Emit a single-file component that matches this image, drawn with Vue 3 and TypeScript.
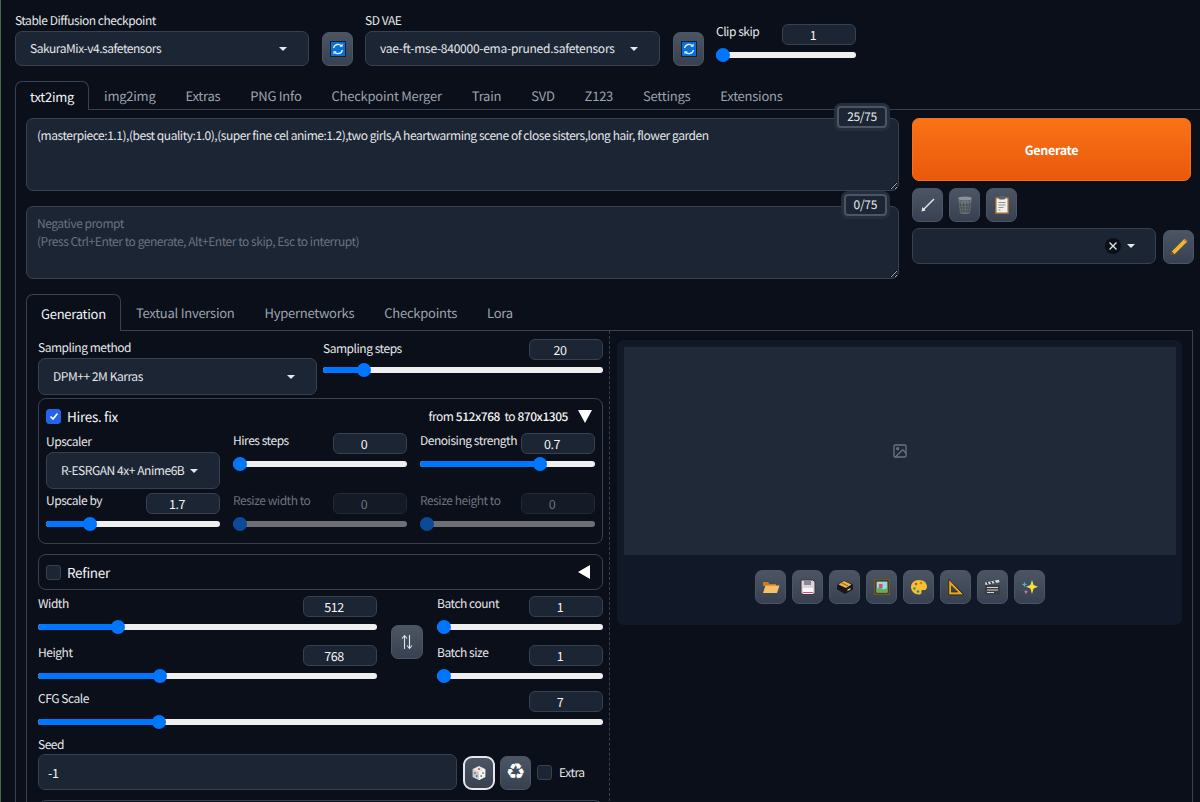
<script setup lang="ts">
interface Slider {
  label: string;
  value: string;
  pct: number;
  off?: boolean;
}

const mainTabs = ['img2img', 'Extras', 'PNG Info', 'Checkpoint Merger', 'Train', 'SVD', 'Z123', 'Settings', 'Extensions'];
const subTabs = ['Textual Inversion', 'Hypernetworks', 'Checkpoints', 'Lora'];

const hiresTop: Slider[] = [
  { label: 'Hires steps', value: '0', pct: 0 },
  { label: 'Denoising strength', value: '0.7', pct: 70 },
];
const hiresBottom: Slider[] = [
  { label: 'Upscale by', value: '1.7', pct: 23 },
  { label: 'Resize width to', value: '0', pct: 0, off: true },
  { label: 'Resize height to', value: '0', pct: 0, off: true },
];
const sizes: Slider[] = [
  { label: 'Width', value: '512', pct: 22.5 },
  { label: 'Height', value: '768', pct: 35.4 },
];
const batches: Slider[] = [
  { label: 'Batch count', value: '1', pct: 0 },
  { label: 'Batch size', value: '1', pct: 0 },
];
const cfg: Slider = { label: 'CFG Scale', value: '7', pct: 20.7 };
const steps: Slider = { label: 'Sampling steps', value: '20', pct: 12.8 };
const clip: Slider = { label: 'Clip skip', value: '1', pct: 0 };

const prompt =
  '(masterpiece:1.1),(best quality:1.0),(super fine cel anime:1.2),two girls,A heartwarming scene of close sisters,long hair, flower garden';
const negative = 'Negative prompt\n(Press Ctrl+Enter to generate, Alt+Enter to skip, Esc to interrupt)';
</script>

<template>
  <div class="page">
    <div class="quick">
      <div class="dd-field w294">
        <span class="lbl">Stable Diffusion checkpoint</span>
        <div class="dd"><span>SakuraMix-v4.safetensors</span><i class="caret"></i></div>
      </div>
      <button class="tool refresh">
        <svg width="16" height="16" viewBox="0 0 16 16">
          <rect x=".5" y=".5" width="15" height="15" fill="#0a6fd6" stroke="#14202e" />
          <path d="M3.500 7a4.600 4.600 0 0 1 8-2M12.500 9a4.600 4.600 0 0 1-8 2" fill="none" stroke="#dff1ff" stroke-width="1.400" />
          <path d="M12.600 2.600v3.200H9.400zM3.400 13.400v-3.200h3.200z" fill="#dff1ff" />
        </svg>
      </button>
      <div class="dd-field w295">
        <span class="lbl">SD VAE</span>
        <div class="dd vae"><span>vae-ft-mse-840000-ema-pruned.safetensors</span><i class="caret"></i></div>
      </div>
      <button class="tool refresh">
        <svg width="16" height="16" viewBox="0 0 16 16">
          <rect x=".5" y=".5" width="15" height="15" fill="#0a6fd6" stroke="#14202e" />
          <path d="M3.500 7a4.600 4.600 0 0 1 8-2M12.500 9a4.600 4.600 0 0 1-8 2" fill="none" stroke="#dff1ff" stroke-width="1.400" />
          <path d="M12.600 2.600v3.200H9.400zM3.400 13.400v-3.200h3.200z" fill="#dff1ff" />
        </svg>
      </button>
      <div class="slider clip">
        <div class="slider-head">
          <span class="lbl">{{ clip.label }}</span>
          <input class="num" :value="clip.value" />
        </div>
        <div class="track"><div class="fill" :style="{ '--p': clip.pct }"></div></div>
      </div>
    </div>

    <div class="tabs main-tabs">
      <div class="tab active">txt2img</div>
      <div v-for="t in mainTabs" :key="t" class="tab">{{ t }}</div>
    </div>

    <div class="main-panel">
      <div class="prompt-row">
        <div class="prompts">
          <div class="prompt-box">
            <textarea class="prompt" :value="prompt"></textarea>
            <span class="counter">25/75</span>
          </div>
          <div class="prompt-box">
            <textarea class="prompt" :placeholder="negative"></textarea>
            <span class="counter">0/75</span>
          </div>
        </div>
        <div class="actions">
          <button class="generate">Generate</button>
          <div class="tool-row">
            <button class="tool">
              <svg width="18" height="18" viewBox="0 0 18 18">
                <path d="M15 3 4 14" stroke="#e5e7eb" stroke-width="1.500" />
                <path d="M2.500 15.500 3.400 11l3.200 3.400z" fill="#e5e7eb" />
              </svg>
            </button>
            <button class="tool">
              <svg width="18" height="20" viewBox="0 0 18 20">
                <ellipse cx="9" cy="3.500" rx="7" ry="2" fill="#8b9298" />
                <path d="M2.300 4.500 4 17.500q.3 1.500 5 1.500t5-1.500l1.700-13q-2 1.500-6.700 1.500T2.300 4.500z" fill="#6b7378" />
                <path d="M4 7l2 11M7.500 8l.4 10M11 8l-.5 10M14 7l-2 11M3 10h12M3.500 13h11M4 16h10" stroke="#3f464c" stroke-width=".7" />
              </svg>
            </button>
            <button class="tool">
              <svg width="16" height="20" viewBox="0 0 16 20">
                <rect x="1" y="2" width="14" height="17" rx="1" fill="#9a6a3c" />
                <rect x="2.500" y="3.500" width="11" height="14" fill="#f2efe6" />
                <rect x="5" y="1" width="6" height="3.500" rx="1" fill="#59616a" />
                <path d="M4.500 7.500h7M4.500 10h7M4.500 12.500h5M4.500 15h2" stroke="#8a939c" stroke-width="1.100" />
              </svg>
            </button>
          </div>
          <div class="style-row">
            <div class="dd style-dd">
              <span class="clear">
                <svg width="10" height="10" viewBox="0 0 10 10"><path d="M1.500 1.500l7 7M8.500 1.500l-7 7" stroke="#e5e7eb" stroke-width="1.300" /></svg>
              </span>
              <i class="caret"></i>
            </div>
            <button class="tool pencil">
              <svg width="20" height="20" viewBox="0 0 18 18">
                <path d="M14 1.500l2.500 2.500L5 15.500 2.500 13z" fill="#f2b632" />
                <path d="M2.500 13 5 15.500 1.500 16.500z" fill="#8a4b22" />
                <path d="M13 2.500l2.500 2.500 1-1L14 1.500z" fill="#d9822b" />
              </svg>
            </button>
          </div>
        </div>
      </div>

      <div class="tabs sub-tabs">
        <div class="tab active">Generation</div>
        <div v-for="t in subTabs" :key="t" class="tab">{{ t }}</div>
      </div>

      <div class="sub-panel">
        <div class="settings">
          <div class="row-sampling">
            <div class="dd-field">
              <span class="lbl">Sampling method</span>
              <div class="dd tall"><span>DPM++ 2M Karras</span><i class="caret"></i></div>
            </div>
            <div class="slider">
              <div class="slider-head">
                <span class="lbl">{{ steps.label }}</span>
                <input class="num" :value="steps.value" />
              </div>
              <div class="track"><div class="fill" :style="{ '--p': steps.pct }"></div></div>
            </div>
          </div>

          <div class="accordion hires">
            <div class="acc-head">
              <span class="check on">
                <svg width="10" height="10" viewBox="0 0 10 10"><path d="M1.500 5.500 4 8l4.500-5.500" fill="none" stroke="#fff" stroke-width="1.600" /></svg>
              </span>
              <span class="acc-title">Hires. fix</span>
              <span class="acc-note">from <b>512x768</b>&nbsp; to <b>870x1305</b></span>
              <i class="tri down"></i>
            </div>
            <div class="hires-grid">
              <div class="dd-field">
                <span class="lbl">Upscaler</span>
                <div class="dd tall"><span>R-ESRGAN 4x+ Anime6B</span><i class="caret"></i></div>
              </div>
              <div v-for="s in hiresTop" :key="s.label" class="slider">
                <div class="slider-head">
                  <span class="lbl">{{ s.label }}</span>
                  <input class="num" :value="s.value" />
                </div>
                <div class="track"><div class="fill" :style="{ '--p': s.pct }"></div></div>
              </div>
              <div v-for="s in hiresBottom" :key="s.label" class="slider" :class="{ off: s.off }">
                <div class="slider-head">
                  <span class="lbl">{{ s.label }}</span>
                  <input class="num" :value="s.value" />
                </div>
                <div class="track"><div class="fill" :style="{ '--p': s.pct }"></div></div>
              </div>
            </div>
          </div>

          <div class="accordion refiner">
            <div class="acc-head">
              <span class="check"></span>
              <span class="acc-title">Refiner</span>
              <i class="tri left"></i>
            </div>
          </div>

          <div class="row-size">
            <div class="stack">
              <div v-for="s in sizes" :key="s.label" class="slider">
                <div class="slider-head">
                  <span class="lbl">{{ s.label }}</span>
                  <input class="num" :value="s.value" />
                </div>
                <div class="track"><div class="fill" :style="{ '--p': s.pct }"></div></div>
              </div>
            </div>
            <button class="tool swap">
              <svg width="12" height="16" viewBox="0 0 12 16">
                <path d="M3.500 15V2M1 4.500 3.500 1.500 6 4.500" fill="none" stroke="#d8e6e2" stroke-width="1.100" />
                <path d="M8.500 1v13M6 11.500l2.500 3 2.500-3" fill="none" stroke="#e5e7eb" stroke-width="1.100" />
              </svg>
            </button>
            <div class="stack">
              <div v-for="s in batches" :key="s.label" class="slider">
                <div class="slider-head">
                  <span class="lbl">{{ s.label }}</span>
                  <input class="num" :value="s.value" />
                </div>
                <div class="track"><div class="fill" :style="{ '--p': s.pct }"></div></div>
              </div>
            </div>
          </div>

          <div class="slider cfg">
            <div class="slider-head">
              <span class="lbl">{{ cfg.label }}</span>
              <input class="num" :value="cfg.value" />
            </div>
            <div class="track"><div class="fill" :style="{ '--p': cfg.pct }"></div></div>
          </div>

          <div class="seed-row">
            <div class="seed-field">
              <span class="lbl">Seed</span>
              <input class="seed" value="-1" />
            </div>
            <button class="tool dice">
              <svg width="16" height="16" viewBox="0 0 18 18">
                <path d="M9 1l7 3.500v9L9 17l-7-3.500v-9z" fill="#e8e8e8" />
                <path d="M9 8.500v8.500L2 13.500v-9z" fill="#c9c9c9" />
                <path d="M9 8.500V17l7-3.500v-9z" fill="#f5f5f5" />
                <ellipse cx="9" cy="4.600" rx="1.400" ry=".9" fill="#d33" />
                <circle cx="4.500" cy="9" r=".9" fill="#444" />
                <circle cx="6.500" cy="12.500" r=".9" fill="#444" />
                <circle cx="13.500" cy="9" r=".9" fill="#444" />
                <circle cx="11.500" cy="12.500" r=".9" fill="#444" />
              </svg>
            </button>
            <button class="tool recycle">♻</button>
            <span class="check extra-check"></span>
            <span class="extra">Extra</span>
          </div>
          <div class="more"></div>
        </div>

        <div class="gallery">
          <div class="image-area">
            <svg width="16" height="16" viewBox="0 0 24 24" fill="none" stroke="#6b7280" stroke-width="2" stroke-linecap="round" stroke-linejoin="round">
              <rect x="3" y="3" width="18" height="18" rx="2" />
              <circle cx="8.500" cy="8.500" r="1.500" />
              <path d="M21 15l-5-5L5 21" />
            </svg>
          </div>
          <div class="gallery-tools">
            <button class="tool">
              <svg width="18" height="14" viewBox="0 0 18 14">
                <path d="M1 2h5l1.500 2H14v2H1z" fill="#c9791f" />
                <path d="M1 13 3.500 5.500H17.500L15 13z" fill="#f4c265" />
              </svg>
            </button>
            <button class="tool">
              <svg width="16" height="16" viewBox="0 0 16 16">
                <path d="M1 1h12l2 2v12H1z" fill="#d9d3dc" stroke="#3a3340" />
                <rect x="4" y="1.500" width="7" height="4.500" fill="#8c8593" />
                <rect x="3" y="9" width="10" height="6" fill="#fbf5fa" />
                <path d="M3 13.500h10" stroke="#d84a6a" />
              </svg>
            </button>
            <button class="tool">
              <svg width="18" height="16" viewBox="0 0 18 16">
                <path d="M1 6 8 1.500l9 4v5L9 15 1 10.500z" fill="#15181c" />
                <path d="M2.500 5.500 8 2l7.500 3.500L10 9z" fill="#f0b53a" />
                <path d="M5.500 3.800 12 7" stroke="#8a5c18" />
                <path d="M11.500 10.500l3-1.500v1.500l-3 1.500z" fill="#cfd3d6" />
              </svg>
            </button>
            <button class="tool">
              <svg width="16" height="16" viewBox="0 0 16 16">
                <rect width="16" height="16" fill="#6d5a22" />
                <rect x="1.500" y="1.500" width="13" height="13" fill="#2a2413" />
                <rect x="2.500" y="2.500" width="11" height="11" fill="#9ed3ea" />
                <path d="M2.500 13.500V10l3-2 4 2.500 4-1.500v4.500z" fill="#5fae5a" />
                <rect x="5" y="5" width="3.500" height="4" fill="#c85a5a" />
              </svg>
            </button>
            <button class="tool">
              <svg width="18" height="16" viewBox="0 0 18 16">
                <path d="M9 1c4.500 0 8 2.800 8 6.500 0 3-2 4-3.500 3.500-1.500-.4-2.500.3-2 2 .4 1.500-.8 2.500-2.500 2.500C4.500 15.500 1 12.200 1 8s3.500-7 8-7z" fill="#f2c230" />
                <circle cx="6" cy="5" r="1.300" fill="#d9432f" />
                <circle cx="11" cy="4" r="1.300" fill="#e0752a" />
                <circle cx="4.500" cy="9.500" r="1.300" fill="#3e9a4a" />
                <circle cx="8" cy="12.500" r="1.300" fill="#3d6cc9" />
              </svg>
            </button>
            <button class="tool">
              <svg width="18" height="18" viewBox="0 0 16 16">
                <path d="M1.500 1v14H15z" fill="#e5a823" stroke="#2a2413" stroke-width=".8" />
                <path d="M4 7v5.500h5.500z" fill="#3c4450" stroke="#2a2413" stroke-width=".6" />
              </svg>
            </button>
            <button class="tool">
              <svg width="17" height="16" viewBox="0 0 17 16">
                <rect x="1" y="6" width="15" height="9.500" fill="#3a3d42" />
                <path d="M1 3.500 15 .8l.5 2.500L1.500 6z" fill="#d5d8db" />
                <path d="M3 3.200l1.500 2.300M6.500 2.500 8 4.800M10 1.800l1.500 2.300" stroke="#2c2f33" stroke-width="1.300" />
                <path d="M3 8.500h11M3 11h11M3 13.500h7" stroke="#cfd3d6" stroke-width="1" />
              </svg>
            </button>
            <button class="tool">
              <svg width="18" height="18" viewBox="0 0 18 18">
                <path d="M11 2l1.600 5 4.400 1.800-4.400 1.800L11 16l-1.600-5.400L5 8.800l4.400-1.800z" fill="#f6e13c" />
                <path d="M3.500 3.500l.8 2.200 2 .8-2 .8-.8 2.200-.8-2.200-2-.8 2-.8z" fill="#3fb8c9" />
                <path d="M5 11.500l.6 1.700 1.600.6-1.600.6L5 16.500l-.6-2.100-1.600-.6 1.600-.6z" fill="#e07ab0" />
              </svg>
            </button>
          </div>
        </div>
      </div>
    </div>
  </div>
</template>

<style>
html,
body {
  background: #0b0f19;
  color-scheme: dark;
  overflow: hidden;
}
</style>

<style scoped>
.page {
  height: 802px;
  overflow: hidden;
  background: #0b0f19;
  border-left: 1px solid #3f6b47;
  box-sizing: border-box;
  padding-left: 14px;
  color: #f3f4f6;
  font-family: "Noto Sans CJK SC", "Noto Sans", sans-serif;
  font-size: 12px;
  letter-spacing: -0.45px;
  text-rendering: geometricPrecision;
}
button,
input,
textarea {
  font-family: inherit;
  color: inherit;
  letter-spacing: inherit;
  text-rendering: inherit;
}
.lbl {
  display: block;
  font-size: 12px;
  letter-spacing: -0.47px;
  line-height: 18px;
  color: #e5e7eb;
  white-space: nowrap;
}

/* top settings */
.quick {
  display: flex;
  align-items: flex-end;
  height: 66px;
  box-sizing: border-box;
}
.w294 {
  width: 294px;
}
.w295 {
  width: 295px;
}
.dd-field .lbl {
  margin-bottom: 1px;
}
.dd {
  display: flex;
  align-items: center;
  justify-content: space-between;
  height: 35px;
  box-sizing: border-box;
  padding: 0 14px;
  background: #1c2533;
  border: 1px solid #374151;
  border-radius: 7px;
  white-space: nowrap;
  color: #e5e7eb;
}
.dd.tall {
  height: 37px;
}
.dd.vae {
  letter-spacing: -0.25px;
}
.caret {
  flex: none;
  width: 0;
  height: 0;
  margin-right: 7px;
  border-left: 4px solid transparent;
  border-right: 4px solid transparent;
  border-top: 4px solid #e5e7eb;
}
.tool {
  display: flex;
  flex: none;
  align-items: center;
  justify-content: center;
  width: 31px;
  height: 34px;
  padding: 0;
  border: 1px solid #4b5563;
  border-radius: 7px;
  background: linear-gradient(to bottom, #4b5563, #374151);
  box-sizing: border-box;
}
.refresh {
  margin: 0 12px 0 13px;
}
.clip {
  width: 140px;
  align-self: flex-start;
  margin-top: 24px;
}

/* sliders */
.slider-head {
  display: flex;
  align-items: flex-start;
  justify-content: space-between;
  height: 21px;
}
.slider-head .lbl {
  margin-top: -1px;
}
.num {
  flex: none;
  width: 74px;
  height: 21px;
  box-sizing: border-box;
  padding: 0 12px 0 0;
  text-align: center;
  font-size: 12.500px;
  background: #1c2533;
  border: 1px solid #374151;
  border-radius: 6px;
  outline: none;
}
.track {
  position: relative;
  height: 6px;
  margin-top: 7px;
  background: #efefef;
  border-radius: 3px;
}
.fill {
  position: absolute;
  left: 0;
  top: 0;
  bottom: 0;
  width: calc(7px + (100% - 14px) * var(--p) / 100);
  background: #0075ff;
  border-radius: 3px;
}
.fill::after {
  content: "";
  position: absolute;
  right: -7px;
  top: -4px;
  width: 14px;
  height: 14px;
  border-radius: 50%;
  background: #0075ff;
}
.off .lbl {
  color: #6b7280;
}
.off .num {
  color: #6b7280;
  background: #141a26;
  border-color: #1f2937;
}
.off .track {
  background: #6d6f75;
}
.off .fill,
.off .fill::after {
  background: #0a4a96;
}

/* tabs */
.tabs {
  display: flex;
  border-bottom: 1px solid #374151;
}
.tab {
  padding: 0 15px;
  font-size: 13px;
  letter-spacing: -0.25px;
  color: #9ca3af;
  white-space: nowrap;
}
.tab.active {
  position: relative;
  color: #f3f4f6;
  background: #0b0f19;
  border: 1px solid #374151;
  border-bottom: none;
  border-radius: 7px 7px 0 0;
  margin-bottom: -1px;
  padding: 0 14px;
}
.main-tabs {
  margin-top: 15px;
  height: 28px;
  line-height: 30px;
}
.sub-tabs {
  height: 36px;
  line-height: 38px;
  margin-right: 7px;
}
.sub-tabs .tab.active {
  height: 37px;
  box-sizing: border-box;
}

/* prompts */
.main-panel {
  border-left: 1px solid #374151;
  padding: 8px 0 0 10px;
}
.prompt-row {
  display: flex;
  gap: 13px;
  height: 176px;
}
.prompts {
  display: flex;
  flex-direction: column;
  gap: 15px;
  width: 873px;
}
.prompt-box {
  position: relative;
  height: 73px;
}
.prompt {
  display: block;
  width: 100%;
  height: 73px;
  box-sizing: border-box;
  padding: 8px 10px;
  font-size: 12px;
  letter-spacing: -0.46px;
  line-height: 18px;
  background: #1c2533;
  border: 1px solid #374151;
  border-radius: 7px;
  outline: none;
  color: #e5e7eb;
}
.prompt::placeholder {
  color: #6b7280;
}
.counter {
  position: absolute;
  right: 12px;
  top: -12px;
  padding: 0 8px;
  line-height: 18px;
  font-size: 12px;
  letter-spacing: -0.3px;
  color: #e5e7eb;
  background: #1c2533;
  border: 2px solid #4b5563;
  border-radius: 4px;
  box-shadow: 0 0 0 3px #252e3c;
}
.actions {
  width: 279px;
}
.generate {
  display: block;
  width: 100%;
  height: 63px;
  font-size: 12.500px;
  letter-spacing: -0.3px;
  font-weight: 700;
  color: #fff;
  background: linear-gradient(to bottom, #f97316, #ea580c);
  border: 1px solid #f97316;
  border-radius: 7px;
}
.tool-row {
  display: flex;
  gap: 6px;
  margin-top: 7px;
}
.style-row {
  display: flex;
  align-items: flex-end;
  margin-top: 6px;
}
.style-dd {
  flex: none;
  width: 244px;
  height: 36px;
  justify-content: flex-end;
  gap: 6px;
  padding-right: 20px;
}
.clear {
  display: flex;
  align-items: center;
  justify-content: center;
  width: 16px;
  height: 16px;
  background: #0b0f19;
  border-radius: 50%;
}
.style-dd .caret {
  margin-right: 0;
}
.pencil {
  margin-left: 7px;
}

/* generation panel */
.sub-panel {
  display: flex;
  height: 500px;
  margin-right: 7px;
  border-left: 1px solid #374151;
  border-right: 1px solid #374151;
  padding: 8px 0 0 11px;
}
.settings {
  width: 565px;
  flex: none;
}
.row-sampling {
  display: grid;
  grid-template-columns: 279px 280px;
  gap: 6px;
  height: 59px;
}
.row-sampling .slider .lbl {
  margin-top: 1px;
}
.accordion {
  border: 1px solid #374151;
  border-radius: 8px;
  box-sizing: border-box;
  padding: 0 7px;
}
.hires {
  height: 146px;
}
.acc-head {
  display: flex;
  align-items: center;
  height: 34px;
}
.check {
  flex: none;
  display: flex;
  align-items: center;
  justify-content: center;
  width: 15px;
  height: 15px;
  box-sizing: border-box;
  background: #1c2533;
  border: 1px solid #374151;
  border-radius: 3px;
}
.check.on {
  background: #2563eb;
  border-color: #2563eb;
}
.acc-title {
  margin-left: 6px;
  font-size: 13.500px;
  letter-spacing: -0.3px;
  color: #f3f4f6;
}
.acc-note {
  margin-left: auto;
  font-size: 12px;
}
.acc-note b {
  font-weight: 500;
}
.tri {
  flex: none;
  width: 0;
  height: 0;
}
.tri.down {
  margin: 0 3px 0 10px;
  border-left: 7px solid transparent;
  border-right: 7px solid transparent;
  border-top: 13px solid #fff;
}
.tri.left {
  margin: 0 5px 0 auto;
  border-top: 7px solid transparent;
  border-bottom: 7px solid transparent;
  border-right: 12px solid #fff;
}
.hires-grid {
  display: grid;
  grid-template-columns: 174px 174px 175px;
  grid-template-rows: 60px 50px;
  column-gap: 13px;
}
.refiner {
  display: flex;
  height: 36px;
  margin-top: 10px;
  align-items: center;
}
.refiner .acc-head {
  flex: 1;
}
.row-size {
  display: flex;
  align-items: center;
  margin-top: 6px;
}
.stack {
  display: flex;
  flex-direction: column;
  gap: 15px;
  width: 339px;
}
.stack:last-child {
  width: 166px;
}
.swap {
  margin: 9px 14px 0;
  width: 32px;
}
.cfg {
  margin-top: 12px;
}
.seed-row {
  display: flex;
  align-items: flex-end;
  margin-top: 11px;
}
.seed-field {
  width: 419px;
}
.seed {
  display: block;
  width: 100%;
  height: 36px;
  box-sizing: border-box;
  padding: 0 9px;
  font-size: 12.500px;
  background: #1c2533;
  border: 1px solid #374151;
  border-radius: 7px;
  outline: none;
}
.dice {
  margin-left: 6px;
  width: 32px;
  border: 2px solid #e5e7eb;
  border-radius: 9px;
}
.recycle {
  margin-left: 5px;
  font-family: "DejaVu Sans", sans-serif;
  font-size: 22px;
  line-height: 1;
  color: #fff;
}
.extra-check {
  margin: 0 7px 10px 6px;
}
.extra {
  margin-bottom: 9px;
  font-size: 12px;
  color: #e5e7eb;
}
.more {
  height: 30px;
  margin-top: 10px;
  border: 1px solid #374151;
  border-radius: 8px;
}

/* gallery */
.gallery {
  flex: none;
  width: 565px;
  height: 285px;
  margin: 1px 0 0 14px;
  padding: 7px 6px 0 7px;
  box-sizing: border-box;
  background: #111827;
  border-radius: 7px;
  position: relative;
}
.gallery::before {
  content: "";
  position: absolute;
  left: -8px;
  top: -9px;
  height: 500px;
  border-left: 1px dashed #374151;
}
.image-area {
  display: flex;
  align-items: center;
  justify-content: center;
  height: 208px;
  background: #1f2937;
}
.gallery-tools {
  display: flex;
  justify-content: center;
  gap: 6px;
  margin-top: 15px;
}
</style>
